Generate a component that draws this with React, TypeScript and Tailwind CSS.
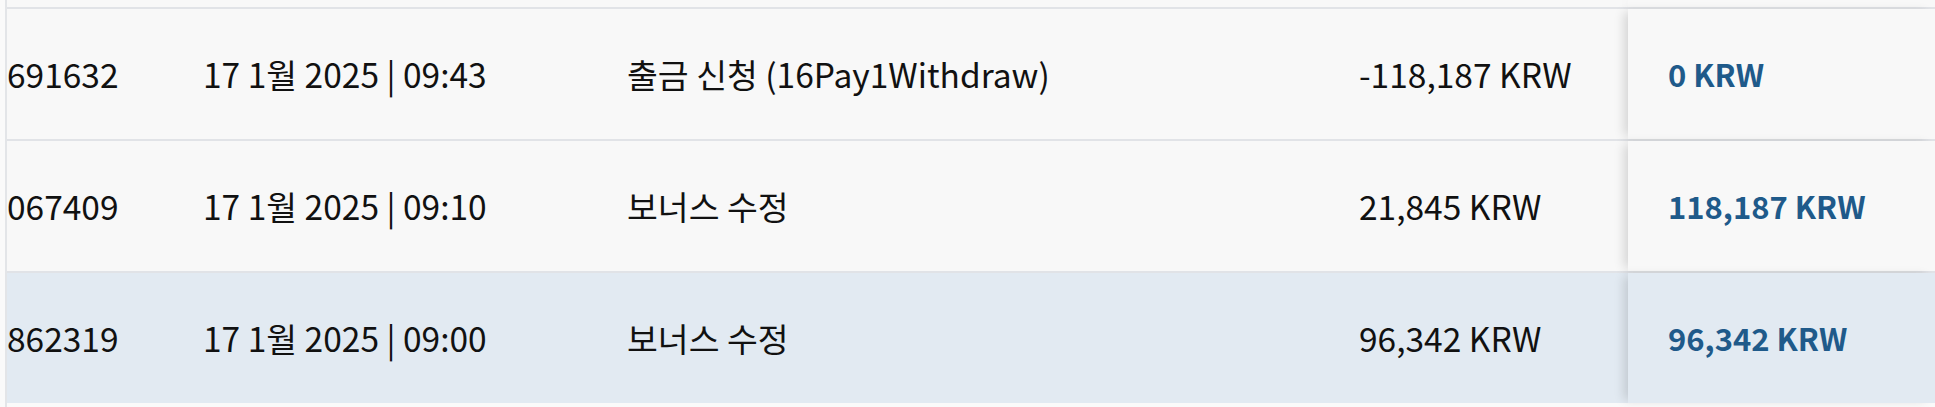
const rows = [
  { id: '691632', date: '17 1월 2025 | 09:43', desc: '출금 신청 (16Pay1Withdraw)', amount: '-118,187 KRW', balance: '0 KRW', active: false },
  { id: '067409', date: '17 1월 2025 | 09:10', desc: '보너스 수정', amount: '21,845 KRW', balance: '118,187 KRW', active: false },
  { id: '862319', date: '17 1월 2025 | 09:00', desc: '보너스 수정', amount: '96,342 KRW', balance: '96,342 KRW', active: true },
];

const font = { fontFamily: '"Noto Sans CJK KR", "Noto Sans", sans-serif' };

export default function App() {
  return (
    <div className="w-[1935px] h-[407px] overflow-hidden bg-[#fafafa] pl-[5px]" style={font}>
      <div className="border-l-2 border-[#e3e5e8] h-full">
        {/* tail of the previous row */}
        <div className="grid grid-cols-[196px_424px_732px_269px_1fr] h-[7px] bg-[#f8f8f8]">
          <div /><div /><div /><div />
          <div className="relative z-10 shadow-[-7px_0_10px_-3px_rgba(0,0,0,0.14)] bg-[#f8f8f8]" />
        </div>

        {rows.map(r => {
          const bg = r.active ? 'bg-[#e2eaf2]' : 'bg-[#f8f8f8]';
          return (
            <div
              key={r.id}
              className={`grid grid-cols-[196px_424px_732px_269px_1fr] h-[132px] border-t-2 border-[#e1e3e7] text-[33.5px] text-[#111] ${bg}`}
            >
              <div className="flex items-center whitespace-nowrap overflow-hidden">{r.id}</div>
              <div className="flex items-center whitespace-nowrap">{r.date}</div>
              <div className="flex items-center whitespace-nowrap">{r.desc}</div>
              <div className="flex items-center whitespace-nowrap">{r.amount}</div>
              <div
                className={`relative z-10 flex items-center pl-[40px] whitespace-nowrap font-semibold text-[31px] text-[#1f5a8a] shadow-[-7px_0_10px_-3px_rgba(0,0,0,0.14)] ${bg}`}
              >
                {r.balance}
              </div>
            </div>
          );
        })}
      </div>
    </div>
  );
}
